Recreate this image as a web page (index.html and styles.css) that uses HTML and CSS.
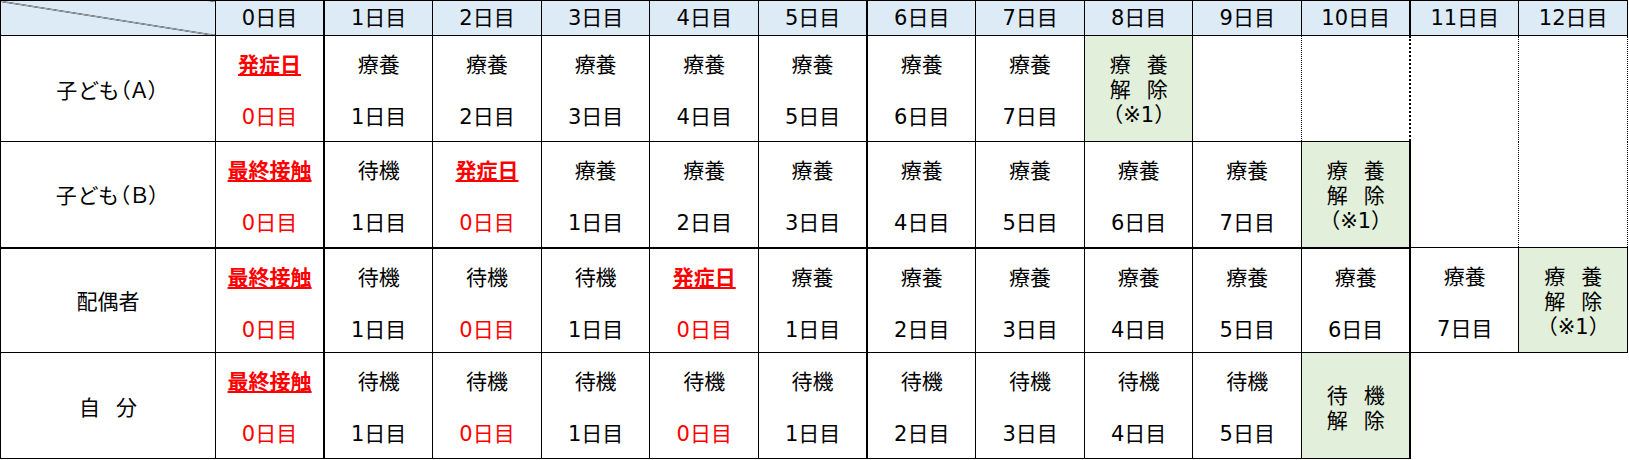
FILE: index.html
```html
<!DOCTYPE html>
<html lang="ja">
<head>
<meta charset="utf-8">
<title>療養期間</title>
<link rel="stylesheet" href="styles.css">
</head>
<body>
<table class="sched">
  <colgroup>
    <col class="c-lab">
    <col span="13">
  </colgroup>
  <thead>
    <tr>
      <th class="diag"></th>
      <th class="tk">0日目</th>
      <th>1日目</th>
      <th>2日目</th>
      <th>3日目</th>
      <th>4日目</th>
      <th class="tk">5日目</th>
      <th>6日目</th>
      <th>7日目</th>
      <th>8日目</th>
      <th>9日目</th>
      <th class="tk">10日目</th>
      <th>11日目</th>
      <th>12日目</th>
    </tr>
  </thead>
  <tbody>
    <tr class="r1">
      <td class="lab"><span class="pl">子ども（Ａ）</span></td>
      <td class="day tk"><div class="l1 red em">発症日</div><div class="l2 red">0日目</div></td>
      <td class="day"><div class="l1">療養</div><div class="l2">1日目</div></td>
      <td class="day"><div class="l1">療養</div><div class="l2">2日目</div></td>
      <td class="day"><div class="l1">療養</div><div class="l2">3日目</div></td>
      <td class="day"><div class="l1">療養</div><div class="l2">4日目</div></td>
      <td class="day tk"><div class="l1">療養</div><div class="l2">5日目</div></td>
      <td class="day"><div class="l1">療養</div><div class="l2">6日目</div></td>
      <td class="day"><div class="l1">療養</div><div class="l2">7日目</div></td>
      <td class="done"><div class="dl"><span class="spread"><span>療</span><span>養</span></span></div><div class="dl"><span class="spread"><span>解</span><span>除</span></span></div><div class="dl">（※1）</div></td>
      <td class="e9"></td>
      <td class="e10"></td>
      <td class="e11" rowspan="2"></td>
      <td class="e12" rowspan="2"></td>
    </tr>
    <tr class="r2 sep">
      <td class="lab"><span class="pl">子ども（Ｂ）</span></td>
      <td class="day tk"><div class="l1 red em">最終接触</div><div class="l2 red">0日目</div></td>
      <td class="day"><div class="l1">待機</div><div class="l2">1日目</div></td>
      <td class="day"><div class="l1 red em">発症日</div><div class="l2 red">0日目</div></td>
      <td class="day"><div class="l1">療養</div><div class="l2">1日目</div></td>
      <td class="day"><div class="l1">療養</div><div class="l2">2日目</div></td>
      <td class="day tk"><div class="l1">療養</div><div class="l2">3日目</div></td>
      <td class="day"><div class="l1">療養</div><div class="l2">4日目</div></td>
      <td class="day"><div class="l1">療養</div><div class="l2">5日目</div></td>
      <td class="day"><div class="l1">療養</div><div class="l2">6日目</div></td>
      <td class="day"><div class="l1">療養</div><div class="l2">7日目</div></td>
      <td class="done tk"><div class="dl"><span class="spread"><span>療</span><span>養</span></span></div><div class="dl"><span class="spread"><span>解</span><span>除</span></span></div><div class="dl">（※1）</div></td>
    </tr>
    <tr class="r3">
      <td class="lab">配偶者</td>
      <td class="day tk"><div class="l1 red em">最終接触</div><div class="l2 red">0日目</div></td>
      <td class="day"><div class="l1">待機</div><div class="l2">1日目</div></td>
      <td class="day"><div class="l1">待機</div><div class="l2 red">0日目</div></td>
      <td class="day"><div class="l1">待機</div><div class="l2">1日目</div></td>
      <td class="day"><div class="l1 red em">発症日</div><div class="l2 red">0日目</div></td>
      <td class="day tk"><div class="l1">療養</div><div class="l2">1日目</div></td>
      <td class="day"><div class="l1">療養</div><div class="l2">2日目</div></td>
      <td class="day"><div class="l1">療養</div><div class="l2">3日目</div></td>
      <td class="day"><div class="l1">療養</div><div class="l2">4日目</div></td>
      <td class="day"><div class="l1">療養</div><div class="l2">5日目</div></td>
      <td class="day tk"><div class="l1">療養</div><div class="l2">6日目</div></td>
      <td class="day"><div class="l1">療養</div><div class="l2">7日目</div></td>
      <td class="done"><div class="dl"><span class="spread"><span>療</span><span>養</span></span></div><div class="dl"><span class="spread"><span>解</span><span>除</span></span></div><div class="dl">（※1）</div></td>
    </tr>
    <tr class="r4">
      <td class="lab"><span class="spread"><span>自</span><span>分</span></span></td>
      <td class="day tk"><div class="l1 red em">最終接触</div><div class="l2 red">0日目</div></td>
      <td class="day"><div class="l1">待機</div><div class="l2">1日目</div></td>
      <td class="day"><div class="l1">待機</div><div class="l2 red">0日目</div></td>
      <td class="day"><div class="l1">待機</div><div class="l2">1日目</div></td>
      <td class="day"><div class="l1">待機</div><div class="l2 red">0日目</div></td>
      <td class="day tk"><div class="l1">待機</div><div class="l2">1日目</div></td>
      <td class="day"><div class="l1">待機</div><div class="l2">2日目</div></td>
      <td class="day"><div class="l1">待機</div><div class="l2">3日目</div></td>
      <td class="day"><div class="l1">待機</div><div class="l2">4日目</div></td>
      <td class="day"><div class="l1">待機</div><div class="l2">5日目</div></td>
      <td class="done mid tk"><div class="dl"><span class="spread"><span>待</span><span>機</span></span></div><div class="dl"><span class="spread"><span>解</span><span>除</span></span></div></td>
    </tr>
  </tbody>
</table>
</body>
</html>
```

FILE: styles.css
```css
html, body {
  margin: 0;
  padding: 0;
  background: #ffffff;
}

body {
  font-family: "DejaVu Sans", "Noto Sans CJK JP", sans-serif;
  color: #000000;
}

.sched {
  border-collapse: collapse;
  table-layout: fixed;
  width: 1628px;
}

.c-lab {
  width: 215px;
}

.sched th,
.sched td {
  border: 1px solid #000000;
  padding: 0;
  text-align: center;
  font-size: 21px;
  font-weight: normal;
}

.sched thead tr {
  height: 35px;
}

.sched thead th {
  background: #ddebf7;
  line-height: 22px;
  vertical-align: middle;
}

.sched thead th.diag {
  background: linear-gradient(to top right, #ddebf7 calc(50% - 0.7px), #000000 50%, #ddebf7 calc(50% + 0.7px));
}

.sched tbody tr {
  height: 106px;
}

.sched tbody tr.r3 {
  height: 105px;
}

.tk {
  border-right-width: 2px !important;
}

.sep td {
  border-bottom-width: 2px;
}

.lab {
  vertical-align: middle;
  padding-top: 4px !important;
  line-height: 26px;
}

.pl {
  font-feature-settings: "palt" 1;
  letter-spacing: 1px;
}

.day {
  vertical-align: top;
  padding-top: 16px !important;
}

.l1,
.l2 {
  line-height: 26px;
  height: 26px;
  white-space: nowrap;
}

.l2 {
  margin-top: 26px;
}

.red {
  color: #ff0000;
}

.em {
  font-weight: bold;
  text-decoration: underline;
  text-underline-offset: 2px;
}

.done {
  background: #e2efda;
  vertical-align: top;
  padding-top: 17px !important;
}

.dl {
  line-height: 25px;
  height: 25px;
  white-space: nowrap;
}

.done.mid {
  vertical-align: middle;
  padding-top: 6px !important;
}

.spread {
  display: inline-flex;
  justify-content: space-between;
  width: 58px;
}

.sched td.e9 {
  border-right: 1px dotted #000000;
}

.sched td.e10 {
  border-left: 1px dotted #000000;
  border-right: 2px dotted #000000;
}

.sched td.e11 {
  border-left: 2px dotted #000000;
  border-right: 1px dotted #000000;
}

.sched td.e12 {
  border-left: 1px dotted #000000;
  border-right: 1px dotted #000000;
}
```
